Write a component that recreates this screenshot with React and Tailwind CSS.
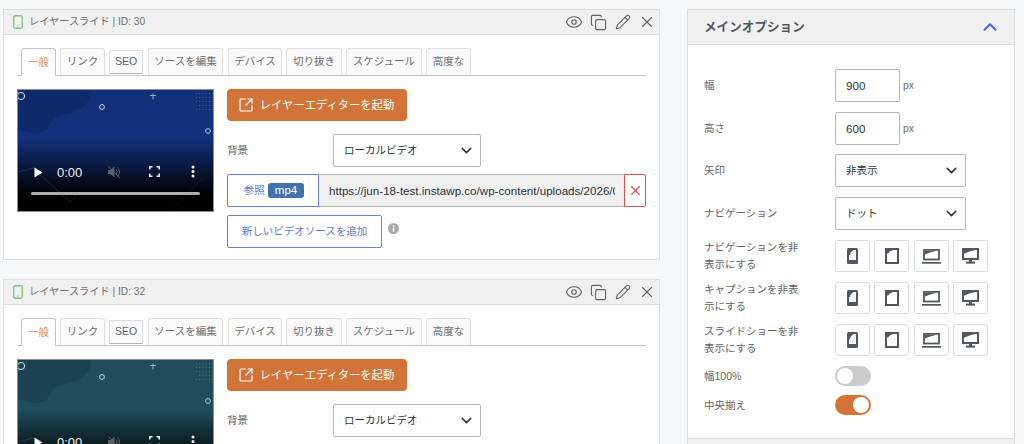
import React from "react";
import { Eye, Copy, Pencil, X, ChevronDown, ChevronUp, SquareArrowOutUpRight } from "lucide-react";

function Phone() {
  return (
    <svg width="11" height="16" viewBox="0 0 11 16">
      <rect x="0" y="0" width="11" height="16" rx="1.5" fill="#50575e" />
      <rect x="2" y="2" width="7" height="10" fill="#f7f7f7" />
      <path d="M2 2h4.5L3.6 4.4 3 7H2z" fill="#50575e" />
    </svg>
  );
}
function Tablet() {
  return (
    <svg width="14" height="16" viewBox="0 0 14 16">
      <rect x="1" y="1" width="12" height="14" fill="#fff" stroke="#50575e" strokeWidth="2" />
      <path d="M2 2h6L4.8 3.4 3 5.5H2z" fill="#50575e" />
    </svg>
  );
}
function Laptop() {
  return (
    <svg width="19" height="16" viewBox="0 0 19 16">
      <rect x="2" y="1.9" width="15" height="9.6" fill="#fff" stroke="#50575e" strokeWidth="1.8" />
      <path d="M3 3h11L8 4.4 3 6.6z" fill="#50575e" />
      <rect x="0" y="14" width="19" height="1.7" fill="#50575e" />
    </svg>
  );
}
function Desktop() {
  return (
    <svg width="17" height="16" viewBox="0 0 17 16">
      <rect x="1" y="1" width="15" height="10" fill="#fff" stroke="#50575e" strokeWidth="2" />
      <path d="M2 2h11L7.5 3.5 2 5.8z" fill="#50575e" />
      <rect x="7" y="11" width="3" height="3" fill="#50575e" />
      <rect x="4" y="13.6" width="9" height="2" fill="#50575e" />
    </svg>
  );
}

function VideoThumb({ bg, blob }) {
  return (
    <div className={`relative h-[123px] w-[197px] shrink-0 overflow-hidden border border-[#8a8f95] ${bg}`}>
      <svg className="absolute inset-0" width="197" height="123" viewBox="0 0 197 123" fill="none">
        <path d="M0 0H73C74 14 60 22 46 24C36 26 33 32 30 38C26 44 14 44 0 39Z" fill={blob} />
        <circle cx="3" cy="6" r="3.6" stroke="#dfe6f2" strokeWidth="1" />
        <circle cx="84" cy="17" r="2.4" stroke="#c9d4e6" strokeWidth="1" />
        <circle cx="190" cy="41" r="2.4" stroke="#b9c6dc" strokeWidth="1" />
        <path d="M135 3.5v6M132 5.5h6" stroke="#b9c6dc" strokeWidth="0.8" />
        <g fill="#c8b878" opacity="0.45">
          {[0, 1, 2, 3, 4].map((r) =>
            [0, 1, 2, 3, 4, 5].map((c) =>
              c >= 5 - r - 1 || r < 3 ? (
                <rect key={`${r}-${c}`} x={178 + c * 3.2} y={3 + r * 4} width="0.9" height="0.9" />
              ) : null
            )
          )}
        </g>
      </svg>
      <div className="absolute inset-x-0 bottom-0 h-[72px] bg-gradient-to-b from-transparent to-black to-[78%]" />
      <svg className="absolute inset-0" width="197" height="123" viewBox="0 0 197 123" fill="none">
        <path d="M0 82L15 78L52 112L60 103" stroke="#7d8aa0" strokeOpacity="0.35" strokeWidth="0.7" />
        <path d="M150 123L185 88" stroke="#7d8aa0" strokeOpacity="0.15" strokeWidth="0.7" />
      </svg>
      <div className="absolute left-[16px] top-[75px] flex h-[14px] items-center">
        <svg width="9" height="11" viewBox="0 0 9 11" className="mr-[14px]">
          <path d="M0.5 0.5L8.5 5.5L0.5 10.5Z" fill="#fff" />
        </svg>
        <span className="text-[13px] leading-none text-[#f1f1f1]">0:00</span>
      </div>
      <svg className="absolute left-[89px] top-[75px]" width="14" height="14" viewBox="0 0 14 14">
        <path d="M1 5h2.5L7.5 1.5v11L3.5 9H1z" fill="#5b5f66" />
        <path d="M9 4.5a3.5 3.5 0 0 1 0 5M10.5 2.5a6 6 0 0 1 0 9" stroke="#5b5f66" strokeWidth="1" fill="none" />
        <path d="M1.5 1.5L13 13" stroke="#5b5f66" strokeWidth="1" />
      </svg>
      <svg className="absolute left-[131px] top-[76px]" width="11" height="11" viewBox="0 0 11 11" fill="none">
        <path d="M0.8 3.5V0.8H3.5M7.5 0.8H10.2V3.5M10.2 7.5V10.2H7.5M3.5 10.2H0.8V7.5" stroke="#f2f2f2" strokeWidth="1.5" />
      </svg>
      <svg className="absolute left-[173px] top-[75px]" width="4" height="13" viewBox="0 0 4 13">
        <circle cx="2" cy="2" r="1.5" fill="#f2f2f2" />
        <circle cx="2" cy="6.5" r="1.5" fill="#f2f2f2" />
        <circle cx="2" cy="11" r="1.5" fill="#f2f2f2" />
      </svg>
      <div className="absolute left-[13px] top-[102px] h-[3px] w-[169px] rounded-full bg-[#aeaeae]" />
    </div>
  );
}

const tabs = [
  ["リンク", "w-[45px]"],
  ["SEO", "w-[34px] mr-px"],
  ["ソースを編集", "w-[75px] mr-px"],
  ["デバイス", "w-[54px]"],
  ["切り抜き", "w-[56px]"],
  ["スケジュール", "w-[76px]"],
  ["高度な", "w-[45px]"],
];

function Card({ id, thumbBg, blob }) {
  return (
    <section className="w-[657px] shrink-0 border border-[#dcdddf] bg-white">
      <header className="flex h-[25px] items-center border-b border-[#dcdddf] bg-[#f0f0f1] pl-[9px] pr-[3px]">
        <svg width="10" height="14" viewBox="0 0 10 14" fill="none">
          <rect x="0.75" y="0.75" width="8.5" height="12.5" rx="1.5" stroke="#7fc47a" strokeWidth="1.3" />
          <rect x="4.5" y="10.5" width="1" height="1" fill="#7a8a7a" />
        </svg>
        <span className="ml-[6px] text-[10.2px] text-[#6b6f74]">レイヤースライド | ID: {id}</span>
        <div className="ml-auto flex items-center text-[#60646a]">
          <Eye size={18} strokeWidth={1.5} className="mr-[7px]" />
          <Copy size={17} strokeWidth={1.6} className="mr-[8px]" />
          <Pencil size={16} strokeWidth={1.6} className="mr-[7px]" />
          <X size={18} strokeWidth={1.5} />
        </div>
      </header>
      <div className="h-[224px] px-[13px] pt-[12px]">
        <nav className="flex h-[29px] items-end gap-[4px] border-b border-[#c3c4c7] pl-[4px]">
          <div className="-mb-px flex h-[28px] w-[35px] items-center justify-center rounded-t-[3px] border border-b-0 border-[#c3c4c7] bg-white text-[10.5px] text-[#e0884f]">一般</div>
          {tabs.map(([t, w]) =>
            t === "SEO" ? (
              <div key={t} className={`mb-[1px] flex h-[24px] ${w} items-center justify-center rounded-t-[2px] border border-[#dcdcde] border-b-[#b5b6b9] bg-[#fafafa] text-[10.5px] text-[#60646a]`}>{t}</div>
            ) : (
              <div key={t} className={`flex h-[27px] ${w} items-center justify-center rounded-t-[3px] border border-b-0 border-[#dfdfe1] bg-[#fafafa] text-[10.5px] text-[#6b6f74]`}>{t}</div>
            )
          )}
        </nav>
        <div className="mt-[13px] flex gap-[13px]">
          <VideoThumb bg={thumbBg} blob={blob} />
          <div className="flex w-[419px] flex-col items-start">
            <button className="flex h-[32px] w-[180px] items-center justify-center gap-[6px] rounded-[4px] bg-[#d27337] pr-[2px] text-[11.3px] text-white">
              <SquareArrowOutUpRight size={16} strokeWidth={1.8} />
              レイヤーエディターを起動
            </button>
            <div className="mt-[13px] flex h-[33px] items-center">
              <span className="w-[106px] text-[10.5px] text-[#60646a]">背景</span>
              <div className="flex h-[33px] w-[148px] items-center justify-between rounded-[2px] border border-[#b5b6b9] bg-white pl-[10px] pr-[5px] text-[10.5px] text-[#2c3338]">
                ローカルビデオ
                <ChevronDown size={17} strokeWidth={2} className="text-[#2c3338]" />
              </div>
            </div>
            <div className="mt-[7px] flex h-[33px] w-[419px]">
              <div className="flex w-[92px] items-center justify-center gap-[3px] rounded-l-[2px] border border-[#6a80e8] bg-white pl-[2px] text-[10.5px] text-[#5f78e6]">
                参照
                <span className="rounded-[3px] bg-[#3f72af] px-[7px] text-[11.5px] leading-[15px] text-white">mp4</span>
              </div>
              <div className="flex min-w-0 flex-1 items-center border-y border-[#b5b6b9] bg-[#f0f0f1] pl-[10px] pr-[9px]">
                <span className="overflow-hidden whitespace-nowrap text-[11.6px] text-[#2c3338]">https://jun-18-test.instawp.co/wp-content/uploads/2026/06/</span>
              </div>
              <div className="flex w-[22px] items-center justify-center rounded-r-[2px] border border-[#d9534f] bg-white text-[#d9534f]">
                <X size={15} strokeWidth={2} />
              </div>
            </div>
            <div className="mt-[8px] flex items-center">
              <button className="h-[33px] w-[155px] rounded-[2px] border border-[#6a80e8] bg-white text-[10.5px] text-[#5f78e6]">新しいビデオソースを追加</button>
              <svg className="-mt-[7px] ml-[6px]" width="11" height="11" viewBox="0 0 11 11">
                <circle cx="5.5" cy="5.5" r="5.5" fill="#a8aaad" />
                <rect x="4.8" y="4.6" width="1.5" height="4" fill="#fff" />
                <rect x="4.8" y="2.4" width="1.5" height="1.4" fill="#fff" />
              </svg>
            </div>
          </div>
        </div>
      </div>
    </section>
  );
}

function Row({ label, h, children }) {
  return (
    <div className={`flex items-center ${h}`}>
      <div className="w-[131px] shrink-0 text-[10.5px] leading-[17px] text-[#60646a]">{label}</div>
      {children}
    </div>
  );
}

function NumberRow({ label, value }) {
  return (
    <Row label={label} h="h-[33px]">
      <div className="flex h-[33px] w-[65px] items-center rounded-[2px] border border-[#b5b6b9] bg-white pl-[10px] text-[11.6px] text-[#2c3338]">{value}</div>
      <span className="ml-[3px] text-[10.5px] text-[#6b6f74]">px</span>
    </Row>
  );
}

function SelectRow({ label, value }) {
  return (
    <Row label={label} h="h-[33px]">
      <div className="flex h-[33px] w-[131px] items-center justify-between rounded-[2px] border border-[#b5b6b9] bg-white pl-[10px] pr-[5px] text-[10.5px] text-[#2c3338]">
        {value}
        <ChevronDown size={17} strokeWidth={2} className="text-[#2c3338]" />
      </div>
    </Row>
  );
}

function DeviceRow({ label }) {
  return (
    <Row label={label} h="h-[32px]">
      <div className="flex gap-[4.3px]">
        {[Phone, Tablet, Laptop, Desktop].map((I, i) => (
          <div key={i} className="flex h-[32px] w-[35px] items-center justify-center rounded-[2px] border border-[#dcdcde] bg-white">
            <I />
          </div>
        ))}
      </div>
    </Row>
  );
}

function Toggle({ on }) {
  return (
    <div className={`flex h-[20px] w-[36px] items-center rounded-full px-[2px] ${on ? "justify-end bg-[#d27337]" : "justify-start bg-[#cbcbcb]"}`}>
      <div className="h-[16px] w-[16px] rounded-full bg-white" />
    </div>
  );
}

export default function App() {
  return (
    <div className="flex h-[444px] w-[1024px] overflow-hidden bg-[#f6f7f9] pl-[3px] pt-[9px] font-['Liberation_Sans','Noto_Sans_CJK_JP',sans-serif]">
      <main className="flex w-[657px] shrink-0 flex-col gap-[19px]">
        <Card id="30" thumbBg="bg-[#12317a]" blob="#0e2a6b" />
        <Card id="32" thumbBg="bg-[#1f4d5c]" blob="#1b4250" />
      </main>
      <aside className="ml-[27px] w-[328px] shrink-0 self-start border border-[#dcdddf] bg-white">
        <header className="flex h-[35px] items-center justify-between border-b border-[#dcdddf] bg-[#f0f0f1] pl-[16px] pr-[13px]">
          <h2 className="text-[12.6px] font-bold text-[#50575e]">メインオプション</h2>
          <ChevronUp size={22} strokeWidth={2.2} className="text-[#4a63e0]" />
        </header>
        <div className="flex h-[393px] flex-col pl-[16px] pt-[24px]">
          <div className="flex flex-col gap-[10px]">
            <NumberRow label="幅" value="900" />
            <NumberRow label="高さ" value="600" />
            <div className="-mt-px">
              <SelectRow label="矢印" value="非表示" />
            </div>
            <SelectRow label="ナビゲーション" value="ドット" />
            <DeviceRow label={<>ナビゲーションを非<br />表示にする</>} />
            <DeviceRow label={<>キャプションを非表<br />示にする</>} />
            <DeviceRow label={<>スライドショーを非<br />表示にする</>} />
            <Row label="幅100%" h="h-[20px]"><Toggle /></Row>
          </div>
          <div className="mt-[9px]">
            <Row label="中央揃え" h="h-[20px]"><Toggle on /></Row>
          </div>
        </div>
        <div className="h-[10px] border-t border-[#dcdddf] bg-[#f0f0f1]" />
      </aside>
    </div>
  );
}
